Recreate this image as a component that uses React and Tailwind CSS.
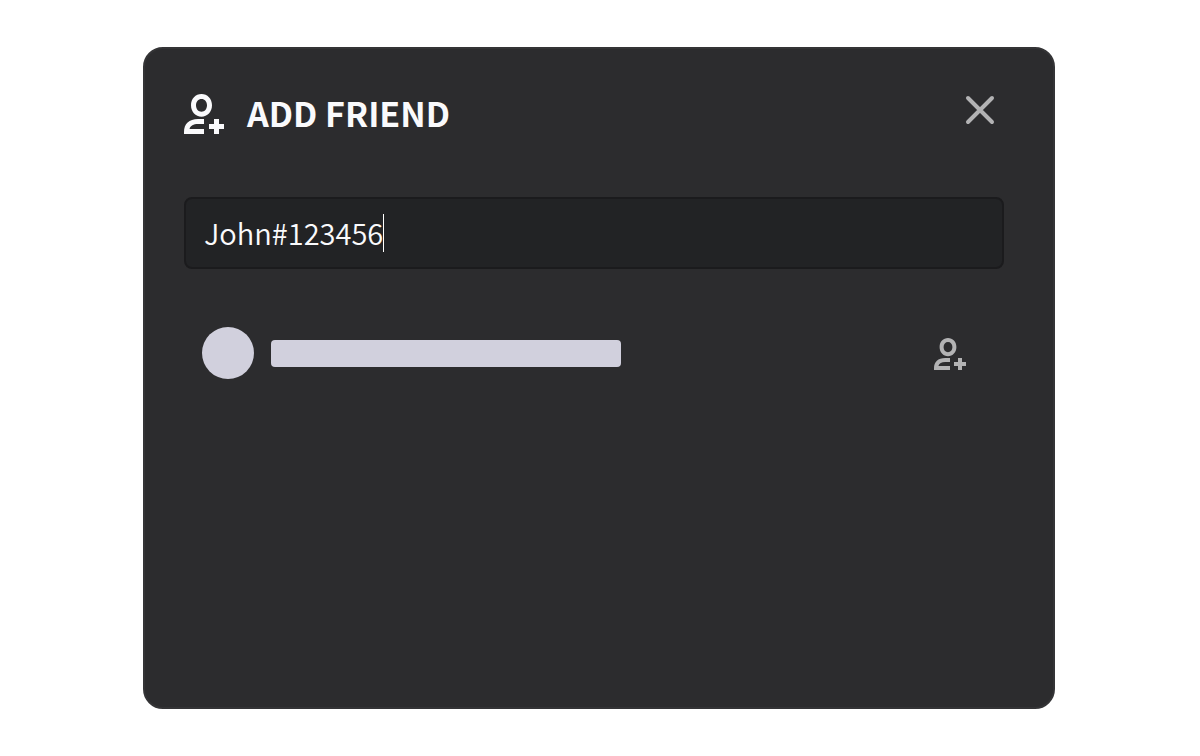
import { useState } from "react";

function PersonAdd({ className }) {
  return (
    <svg viewBox="0 0 40 40" className={className} fill="currentColor" aria-hidden="true">
      <path
        fillRule="evenodd"
        d="M17.5 0C23.400 0 28 4.600 28 11.300S23.400 22.700 17.500 22.700 7 18 7 11.300 11.600 0 17.500 0ZM17.500 5C14.300 5 12 7.500 12 11.300s2.300 6.400 5.500 6.400S23 15.100 23 11.300 20.700 5 17.500 5Z"
      />
      <path d="M0 40V38C0 30 5 25 14 25H20V30H14C9.500 30 6.400 31.500 5.500 35H20V40Z" />
      <path d="M30 25H35V30H40V35H35V40H30V35H25V30H30Z" />
    </svg>
  );
}

export default function App() {
  const [tag, setTag] = useState("John#123456");
  return (
    <main
      className="flex min-h-screen justify-center bg-white pt-[47px] pr-0.5 pb-[47px] text-[#fafafc]"
      style={{ fontFamily: '"Noto Sans CJK SC", "Noto Sans", sans-serif' }}
    >
      <section
        aria-labelledby="title"
        className="min-h-[662px] w-full max-w-[912px] rounded-[20px] border-2 border-[#343436] bg-[#2c2c2e] pt-[45px] pr-[49px] pb-10 pl-[39px]"
      >
        <header className="flex items-start justify-between pr-2">
          <div className="flex items-start gap-[23px]">
            <PersonAdd className="size-10" />
            <h1 id="title" className="text-[34px] leading-[38px] font-bold">
              ADD FRIEND
            </h1>
          </div>
          <button type="button" aria-label="Close" className="text-[#b3b3b4]">
            <svg viewBox="0 0 32 32" className="size-8" fill="none" stroke="currentColor" strokeWidth="4" strokeLinecap="round">
              <path d="M4 4 28 28M28 4 4 28" />
            </svg>
          </button>
        </header>

        <div className="relative mt-[63px] text-[29px] font-[350]">
          <input
            type="text"
            aria-label="Friend tag"
            value={tag}
            onChange={(e) => setTag(e.target.value)}
            className="block h-[72px] w-full rounded-lg border-2 border-[#1b1b1d] bg-[#222325] px-[18px] pb-0.5 caret-transparent outline-none"
          />
          <div aria-hidden="true" className="pointer-events-none absolute inset-y-0 left-[20px] flex items-center">
            <span className="h-[38px] border-r border-white leading-[38px] whitespace-pre text-transparent">
              {tag}
            </span>
          </div>
        </div>

        <div className="mt-[58px] flex items-center gap-[17px] pr-[38px] pl-[18px]">
          <div className="size-[52px] shrink-0 rounded-full bg-[#d1d0dd]" />
          <div className="h-[27px] w-full max-w-[350px] rounded bg-[#d1d0dd]" />
          <button type="button" aria-label="Add friend" className="mt-0.5 ml-auto shrink-0 text-[#b3b3b4]">
            <PersonAdd className="size-8" />
          </button>
        </div>
      </section>
    </main>
  );
}
